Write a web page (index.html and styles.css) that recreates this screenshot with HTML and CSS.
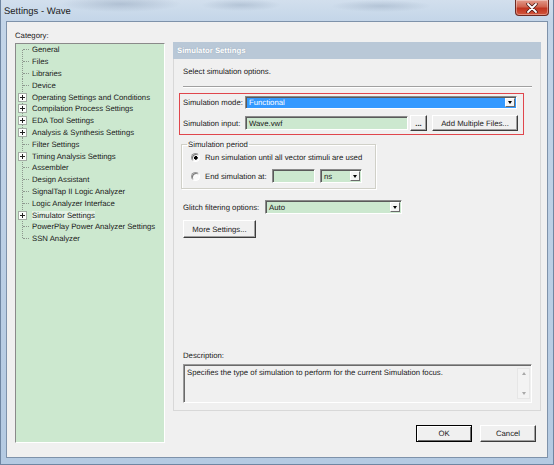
FILE: index.html
```html
<!DOCTYPE html>
<html>
<head>
<meta charset="utf-8">
<title>Settings - Wave</title>
<link rel="stylesheet" href="styles.css">
</head>
<body>
<div class="window">
  <div class="titlebar">
    <span class="title">Settings - Wave</span>
    <div class="close">
      <svg width="12" height="10" viewBox="0 0 12 10"><path d="M2 1 L10 9 M10 1 L2 9" stroke="#4a1a16" stroke-width="3.4" stroke-linecap="round"/><path d="M2 1 L10 9 M10 1 L2 9" stroke="#ffffff" stroke-width="1.8" stroke-linecap="round"/></svg>
    </div>
  </div>
  <div class="client">
    <div class="cat-label">Category:</div>
    <div class="main">
      <ul class="tree">
        <li class="first"><span class="conn"><span class="stub"></span></span><span class="txt">General</span></li>
        <li><span class="conn"><span class="stub"></span></span><span class="txt">Files</span></li>
        <li><span class="conn"><span class="stub"></span></span><span class="txt">Libraries</span></li>
        <li><span class="conn"><span class="stub"></span></span><span class="txt">Device</span></li>
        <li><span class="conn"><span class="plus"></span></span><span class="txt">Operating Settings and Conditions</span></li>
        <li><span class="conn"><span class="plus"></span></span><span class="txt">Compilation Process Settings</span></li>
        <li><span class="conn"><span class="plus"></span></span><span class="txt">EDA Tool Settings</span></li>
        <li><span class="conn"><span class="plus"></span></span><span class="txt">Analysis &amp; Synthesis Settings</span></li>
        <li><span class="conn"><span class="stub"></span></span><span class="txt">Filter Settings</span></li>
        <li><span class="conn"><span class="plus"></span></span><span class="txt">Timing Analysis Settings</span></li>
        <li><span class="conn"><span class="stub"></span></span><span class="txt">Assembler</span></li>
        <li><span class="conn"><span class="stub"></span></span><span class="txt">Design Assistant</span></li>
        <li><span class="conn"><span class="stub"></span></span><span class="txt">SignalTap II Logic Analyzer</span></li>
        <li><span class="conn"><span class="stub"></span></span><span class="txt">Logic Analyzer Interface</span></li>
        <li><span class="conn"><span class="plus"></span></span><span class="txt selected">Simulator Settings</span></li>
        <li><span class="conn"><span class="stub"></span></span><span class="txt">PowerPlay Power Analyzer Settings</span></li>
        <li class="last"><span class="conn"><span class="stub"></span></span><span class="txt">SSN Analyzer</span></li>
      </ul>
      <div class="right">
        <div class="panel">
          <div class="panel-head">Simulator Settings</div>
          <div class="panel-body">
            <div class="intro">Select simulation options.</div>
            <div class="sep"></div>
            <div class="redbox">
              <div class="row row-mode">
                <span class="lbl lbl-62">Simulation mode:</span>
                <div class="combo combo-mode sel"><span class="val">Functional</span><span class="drop"></span></div>
              </div>
              <div class="row row-input">
                <span class="lbl lbl-62">Simulation input:</span>
                <div class="field field-file"><span class="val">Wave.vwf</span></div>
                <button class="btn btn-dots">...</button>
                <button class="btn btn-add">Add Multiple Files...</button>
              </div>
            </div>
            <fieldset class="group">
              <legend>Simulation period</legend>
              <div class="radio-row row-run">
                <span class="radio on"></span>
                <span class="rtext">Run simulation until all vector stimuli are used</span>
              </div>
              <div class="radio-row row-end">
                <span class="radio"></span>
                <span class="rtext rtext-end">End simulation at:</span>
                <div class="field field-time"></div>
                <div class="combo combo-ns"><span class="val">ns</span><span class="drop"></span></div>
              </div>
            </fieldset>
            <div class="row row-glitch">
              <span class="lbl lbl-82">Glitch filtering options:</span>
              <div class="combo combo-glitch"><span class="val">Auto</span><span class="drop"></span></div>
            </div>
            <button class="btn btn-more">More Settings...</button>
            <div class="spacer"></div>
            <div class="desc-label">Description:</div>
            <div class="desc-box">
              <div class="desc-text">Specifies the type of simulation to perform for the current Simulation focus.</div>
              <div class="scroll">
                <span class="arr up"></span>
                <span class="arr down"></span>
              </div>
            </div>
          </div>
        </div>
        <div class="buttons">
          <button class="btn btn-dlg btn-default">OK</button>
          <button class="btn btn-dlg">Cancel</button>
        </div>
      </div>
    </div>
  </div>
</div>
</body>
</html>
```
FILE: styles.css
```css
* { box-sizing: border-box; }
html, body { margin: 0; padding: 0; }
body {
  width: 554px;
  height: 465px;
  overflow: hidden;
  font-family: "Liberation Sans", Arial, sans-serif;
  font-size: 7.75px;
  color: #1a1a1a;
  background: #b8cce2;
  text-rendering: geometricPrecision;
}
.window {
  width: 554px;
  height: 465px;
  display: flex;
  flex-direction: column;
  background:
    radial-gradient(ellipse 60px 8px at 120px 4px, rgba(120,140,165,0.35), transparent),
    radial-gradient(ellipse 40px 6px at 240px 5px, rgba(120,140,165,0.3), transparent),
    radial-gradient(ellipse 50px 6px at 380px 6px, rgba(120,140,165,0.3), transparent),
    linear-gradient(to bottom, #d2dfed 0px, #c3d5e8 22px, #b4cae2 100%);
  border: 1px solid #6f86a2;
  border-top: none;
}
.titlebar {
  height: 21px;
  display: flex;
  justify-content: space-between;
  align-items: flex-start;
  padding: 0 4px 0 3px;
}
.title {
  font-size: 9.5px;
  margin-top: 6px;
  color: #1c1c1c;
  line-height: 11px;
}
.close {
  width: 34px;
  height: 16px;
  border: 1px solid #6d2a22;
  border-top: none;
  border-radius: 0 0 4px 4px;
  background: linear-gradient(to bottom, #e39a8a 0%, #d0644f 45%, #c0341f 55%, #d2583e 100%);
  display: flex;
  align-items: center;
  justify-content: center;
  box-shadow: inset 0 0 0 1px rgba(255,255,255,0.35);
}
.client {
  flex: 1;
  margin: 0 5px 6px 5px;
  border: 1px solid #7e92aa;
  background: #f0f0f0;
  padding: 8px 6px 14px 8px;
  display: flex;
  flex-direction: column;
}
.cat-label {
  height: 12px;
  line-height: 12px;
}
.main {
  flex: 1;
  display: flex;
}
/* tree */
.tree {
  list-style: none;
  margin: 1px 0 0 0;
  padding: 0;
  width: 150px;
  background: #cce8cf;
  border: 1px solid;
  border-color: #8a8a8a #ffffff #ffffff #8a8a8a;
}
.tree li {
  height: 11.8px;
  display: flex;
  align-items: center;
  white-space: nowrap;
}
.conn {
  width: 16px;
  height: 100%;
  display: flex;
  align-items: center;
  background-image: repeating-linear-gradient(to bottom, #8d978e 0 1px, transparent 1px 2px);
  background-size: 1px 100%;
  background-repeat: no-repeat;
  background-position: 6px 0;
}
.first .conn { background-size: 1px 50%; background-position: 6px 100%; }
.last .conn { background-size: 1px 50%; background-position: 6px 0; }
.stub {
  margin-left: 7px;
  width: 6px;
  height: 0;
  border-top: 1px dotted #8d978e;
}
.plus {
  margin-left: 2px;
  width: 9px;
  height: 9px;
  border: 1px solid #a3aba4;
  background-color: #fbfdfb;
  background-image: linear-gradient(#222, #222), linear-gradient(#222, #222);
  background-size: 5px 1px, 1px 5px;
  background-position: center, center;
  background-repeat: no-repeat;
}
.txt.selected { background: #e3f1e4; }
/* right column */
.right {
  flex: 1;
  margin-left: 8px;
  display: flex;
  flex-direction: column;
}
.panel {
  height: 369px;
  display: flex;
  flex-direction: column;
}
.panel-head {
  height: 17px;
  background: #b9c8d7;
  color: #fff;
  font-weight: bold;
  padding-left: 4px;
  line-height: 17px;
  text-shadow: 0 0 1px rgba(90,110,130,0.5);
}
.panel-body {
  flex: 1;
  border: 1px solid #d8d8d8;
  border-top: none;
  padding: 0 8px 7px 9px;
  display: flex;
  flex-direction: column;
}
.intro {
  margin-top: 7px;
  line-height: 11px;
}
.sep {
  margin-top: 9px;
  height: 2px;
  border-top: 1px solid #a0a0a0;
  border-bottom: 1px solid #ffffff;
}
.redbox {
  margin-top: 5px;
  margin-left: -4px;
  width: 345px;
  height: 42px;
  border: 1px solid #e0464c;
  padding: 2px 0 0 3px;
}
.row {
  display: flex;
  align-items: center;
}
.lbl { white-space: nowrap; }
.lbl-62 { width: 62px; }
.lbl-82 { width: 82px; }
.row-mode { height: 13px; }
.row-input { height: 16px; margin-top: 6px; }
.combo, .field {
  height: 14px;
  border: 1px solid;
  border-color: #8a8a8a #ffffff #ffffff #8a8a8a;
  box-shadow: inset 1px 1px 0 #5a5a5a;
  background: #cce8cf;
  display: flex;
  align-items: center;
}
.val { padding-left: 3px; flex: 1; white-space: nowrap; }
.combo-mode { width: 272px; height: 13px; background: #3399ff; color: #fff; }
.combo-mode .val { margin: 1px 0 1px 1px; height: 10px; line-height: 10px; padding-left: 2px; }
.drop {
  width: 10px;
  height: calc(100% - 2px);
  margin: 1px 1px 1px 0;
  background: #f4f4f4;
  border: 1px solid;
  border-color: #ffffff #6a6a6a #6a6a6a #ffffff;
  display: flex;
  align-items: center;
  justify-content: center;
}
.drop::after {
  content: "";
  border-left: 2.5px solid transparent;
  border-right: 2.5px solid transparent;
  border-top: 3px solid #000;
}
.field-file { width: 163px; }
.btn {
  font-family: inherit;
  font-size: 7.75px;
  color: #1a1a1a;
  text-rendering: geometricPrecision;
  background: #f0f0f0;
  border: 1px solid;
  border-color: #ffffff #3c3c3c #3c3c3c #ffffff;
  box-shadow: inset -1px -1px 0 #a0a0a0;
  padding: 0;
  margin: 0;
  height: 16px;
  line-height: 13px;
  white-space: nowrap;
}
.btn-dots { width: 17px; margin-left: 2px; font-weight: bold; }
.btn-add { width: 86px; margin-left: 5px; }
/* group */
.group {
  margin: 4px 0 0 -2px;
  width: 195px;
  padding: 0 0 5px 0;
  border: 1px solid #d0d0c8;
  box-shadow: 1px 1px 0 #ffffff, inset 1px 1px 0 #ffffff;
  min-width: 0;
}
.group legend {
  margin-left: 5px;
  padding: 0 1px;
  line-height: 11px;
}
.radio-row {
  display: flex;
  align-items: center;
  padding-left: 9px;
}
.row-run { margin-top: 2px; height: 11px; }
.row-end { margin-top: 6px; height: 14px; }
.radio {
  width: 9px;
  height: 9px;
  border-radius: 50%;
  border: 1px solid;
  border-color: #9a9a9a #ffffff #ffffff #9a9a9a;
  background: #fafafa;
  box-shadow: inset 1px 1px 0 #7a7a7a;
}
.radio.on {
  background: radial-gradient(circle at 55% 55%, #000 0 1.6px, #fafafa 2px);
}
.rtext { margin-left: 5px; white-space: nowrap; }
.rtext-end { width: 67px; }
.field-time { width: 43px; }
.combo-ns { width: 42px; margin-left: 5px; }
.row-glitch { margin-top: 11px; height: 14px; }
.combo-glitch { width: 137px; }
.btn-more { margin-top: 6px; width: 73px; height: 18px; }
.spacer { flex: 1; }
.desc-label { line-height: 11px; margin-bottom: 3px; }
.desc-box {
  height: 39px;
  border: 1px solid;
  border-color: #9a9a9a #ffffff #ffffff #9a9a9a;
  box-shadow: inset 1px 1px 0 #6a6a6a;
  background: #f0f0f0;
  display: flex;
}
.desc-text { flex: 1; padding: 3px 0 0 3px; line-height: 10px; }
.scroll {
  width: 13px;
  margin: 3px 1px 3px 0;
  border: 1px solid #e6e6e6;
  background: #f3f3f3;
  display: flex;
  flex-direction: column;
  justify-content: space-between;
  align-items: center;
  padding: 3px 0;
}
.arr { width: 0; height: 0; border-left: 2.5px solid transparent; border-right: 2.5px solid transparent; }
.arr.up { border-bottom: 3px solid #a8a8a8; }
.arr.down { border-top: 3px solid #a8a8a8; }
.buttons {
  margin-top: 14px;
  height: 17px;
  display: flex;
  justify-content: flex-end;
  gap: 8px;
  padding-right: 5px;
}
.btn-dlg { width: 56px; height: 17px; }
.btn-default {
  border: 1px solid #000;
  box-shadow: inset 1px 1px 0 #ffffff, inset -1px -1px 0 #6a6a6a;
}
```
